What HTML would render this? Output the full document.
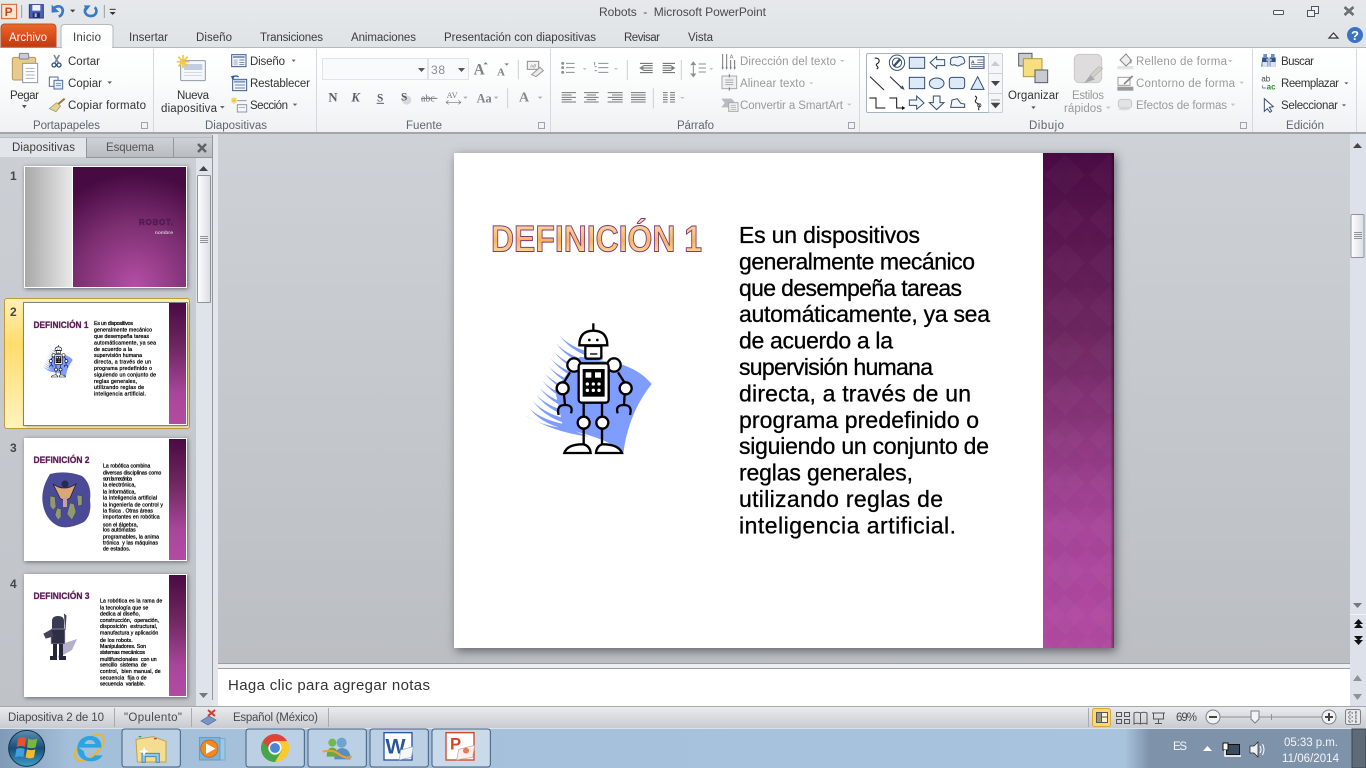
<!DOCTYPE html>
<html lang="es">
<head>
<meta charset="utf-8">
<title>Robots - Microsoft PowerPoint</title>
<style>
html,body{margin:0;padding:0;width:1366px;height:768px;overflow:hidden;background:#d8dce0;font-family:"Liberation Sans",sans-serif}
.b{position:absolute}
svg{position:absolute;left:0;top:0}
text{font-family:"Liberation Sans",sans-serif;white-space:pre}
.r{font-size:11.5px;fill:#333}
.g{font-size:11.5px;fill:#9a9a9a}
.l{font-size:11.5px;fill:#5f6670}
.t{font-size:11.5px;fill:#3c3c3c}
.s{font-size:11.5px;fill:#4a4a4a}
.m{font-size:23px;fill:#000;stroke:#000;stroke-width:.3}
.th{font-size:5.2px;fill:#000;stroke:#000;stroke-width:.25}
.tt{font-size:9.5px;font-weight:bold;fill:#5c1b57;stroke:#5c1b57;stroke-width:.3}
.n{font-size:12px;font-weight:bold;fill:#44484e}
</style>
</head>
<body>
<div class="b" style="left:0;top:0;width:1366px;height:47px;background:linear-gradient(#e6e9ec,#dfe3e6)"></div>
<div class="b" style="left:0;top:47px;width:1366px;height:87px;box-sizing:border-box;border-top:1px solid #b4b9be;border-bottom:2px solid #a2a6ab;background:linear-gradient(#fff 0,#fbfcfc 40%,#eff1f3 100%)"></div>
<div class="b" style="left:0;top:134px;width:217px;height:572px;background:linear-gradient(#ccd0d5,#bfc3c8)"></div>
<div class="b" style="left:212px;top:134px;width:6px;height:572px;background:#e3e6eb"></div>
<div class="b" style="left:218px;top:134px;width:1132px;height:530px;background:linear-gradient(#ced2d7,#bbbec2)"></div>
<div class="b" style="left:1350px;top:134px;width:16px;height:572px;background:#dde1ea"></div>
<div class="b" style="left:218px;top:663px;width:1132px;height:6px;box-sizing:border-box;border-top:1px solid #9a9da1;border-bottom:1px solid #9a9da1;background:#eceef0"></div>
<div class="b" style="left:218px;top:669px;width:1132px;height:37px;background:#fff"></div>
<div class="b" style="left:0;top:706px;width:1366px;height:22px;box-sizing:border-box;border-top:1px solid #a4a8ad;background:linear-gradient(#e9ebee,#c8cbd0)"></div>
<div class="b" style="left:0;top:728px;width:1366px;height:40px;background:linear-gradient(90deg,#7f9ab6 0,#a3bfda 70px,#a8c3dd 1125px,#7e92aa 1150px,#7e92aa 100%)"></div>
<div class="b" style="left:0;top:728px;width:1366px;height:1px;background:#dbe2ea"></div>
<div class="b" style="left:454px;top:153px;width:660px;height:495px;background:#fff;box-shadow:2px 3px 9px rgba(40,40,50,.6)"></div>
<div class="b" style="left:24px;top:166px;width:163px;height:122px;background:#fff;box-shadow:1px 1px 4px rgba(40,40,50,.6)"></div>
<div class="b" style="left:4px;top:298px;width:186px;height:131px;box-sizing:border-box;border:1px solid #c19a3c;border-radius:3px;background:linear-gradient(#fff0b4,#ffdc6c 35%,#fff3bf 100%)"></div>
<div class="b" style="left:24px;top:303px;width:163px;height:122px;background:#fff;outline:1px solid #7d8087;box-shadow:1px 1px 3px rgba(40,40,50,.5)"></div>
<div class="b" style="left:24px;top:438px;width:163px;height:123px;background:#fff;box-shadow:1px 1px 4px rgba(40,40,50,.6)"></div>
<div class="b" style="left:24px;top:574px;width:163px;height:123px;background:#fff;box-shadow:1px 1px 4px rgba(40,40,50,.6)"></div>

<svg width="1366" height="768" viewBox="0 0 1366 768" xmlns="http://www.w3.org/2000/svg">
<defs>
<linearGradient id="band" x1="0" y1="0" x2="0" y2="1"><stop offset="0" stop-color="#4a0a44"/><stop offset=".38" stop-color="#702862"/><stop offset=".75" stop-color="#a8469a"/><stop offset="1" stop-color="#b24ba2"/></linearGradient>
<linearGradient id="edge" x1="0" y1="0" x2="1" y2="0"><stop offset=".95" stop-color="#000" stop-opacity="0"/><stop offset="1" stop-color="#000" stop-opacity=".4"/></linearGradient>
<pattern id="dia" width="44" height="44" patternUnits="userSpaceOnUse" x="1043" y="153"><polygon points="22,2 42,22 22,42 2,22" fill="#fff" fill-opacity=".025"/><polygon points="22,-22 44,0 22,22 0,0" fill="#000" fill-opacity=".025"/><polygon points="22,22 44,44 22,66 0,44" fill="#000" fill-opacity=".025"/></pattern>
<linearGradient id="ttl" x1="0" y1="0" x2="0" y2="1"><stop offset="0" stop-color="#fde4c0"/><stop offset=".55" stop-color="#f9b45c"/><stop offset="1" stop-color="#fee8c8"/></linearGradient>
<linearGradient id="arch" x1="0" y1="0" x2="0" y2="1"><stop offset="0" stop-color="#e86a2e"/><stop offset=".55" stop-color="#d84c18"/><stop offset="1" stop-color="#c03a12"/></linearGradient>
<linearGradient id="tab" x1="0" y1="0" x2="0" y2="1"><stop offset="0" stop-color="#fff"/><stop offset="1" stop-color="#fbfcfc"/></linearGradient>
<radialGradient id="t1p" cx=".55" cy="1" r=".95"><stop offset="0" stop-color="#b64fa6"/><stop offset=".55" stop-color="#7d2f72"/><stop offset="1" stop-color="#470a42"/></radialGradient>
<linearGradient id="t1g" x1="0" y1="0" x2="1" y2="0"><stop offset="0" stop-color="#a8a8a8"/><stop offset="1" stop-color="#e9e9e9"/></linearGradient>
<linearGradient id="tb" x1="0" y1="0" x2="1" y2="0"><stop offset="0" stop-color="#fff"/><stop offset="1" stop-color="#d9dce3"/></linearGradient>
<linearGradient id="orb" x1="0" y1="0" x2="0" y2="1"><stop offset="0" stop-color="#5f8fb3"/><stop offset=".5" stop-color="#174e78"/><stop offset="1" stop-color="#3f9fc4"/></linearGradient>
<linearGradient id="esq" x1="0" y1="0" x2="0" y2="1"><stop offset="0" stop-color="#ced2d6"/><stop offset="1" stop-color="#b9bdc2"/></linearGradient>
<g id="robot">
<path fill="#7f9cff" d="M300 440L420 462Q480 480 515 522Q445 610 430 730Q400 690 250 655L225 540Z"/>
<path fill="#7f9cff" d="M238 376q40 44 130 60v14q-85 -14 -130 -74zM228 400q40 44 130 60v14q-85 -14 -130 -74zM222 425q40 44 130 60v14q-85 -14 -130 -74zM212 445q40 44 130 60v14q-85 -14 -130 -74zM205 468q40 44 130 60v14q-85 -14 -130 -74zM195 490q40 44 130 60v14q-85 -14 -130 -74zM187 512q40 44 130 60v14q-85 -14 -130 -74zM178 533q40 44 130 60v14q-85 -14 -130 -74zM168 553q40 44 130 60v14q-85 -14 -130 -74zM158 573q40 44 130 60v14q-85 -14 -130 -74zM147 594q40 40 130 52v14q-85 -10 -130 -66zM135 615q50 35 130 40l60 25q-110 -15 -190 -65z"/>
<g fill="#fff" stroke="#000" stroke-width="7">
<path d="M340 340V362" fill="none"/>
<path d="M298 406Q298 362 340 362Q382 362 382 406Z"/>
<path d="M316 408H364V440Q364 446 358 446H322Q316 446 316 440Z"/>
<path d="M270 487L250 520M414 487L435 520M252 553L255 585M434 553L432 585M311 578V622M366 578V622M311 656V705M366 656V705" fill="none"/>
<path d="M236 615Q228 585 255 585Q281 585 273 610M413 610Q405 585 432 585Q458 585 450 615" fill="none"/>
<circle cx="282" cy="465" r="20"/><circle cx="402" cy="465" r="20"/>
<circle cx="248" cy="535" r="18"/><circle cx="437" cy="535" r="18"/>
<circle cx="311" cy="638" r="18"/><circle cx="367" cy="638" r="18"/>
<rect x="296" y="460" width="90" height="118" rx="9"/>
<path d="M253 729Q262 702 311 703Q330 708 332 729ZM348 729Q350 708 366 703Q415 702 426 729Z"/>
</g>
<rect x="308" y="477" width="66" height="83" fill="#000"/>
<rect x="317" y="487" width="17" height="16" fill="#fff"/><rect x="345" y="487" width="18" height="16" fill="#fff"/>
<g fill="#fff"><circle cx="322" cy="522" r="5"/><circle cx="340" cy="522" r="5"/><circle cx="357" cy="522" r="5"/><circle cx="322" cy="541" r="5"/><circle cx="340" cy="541" r="5"/><circle cx="357" cy="541" r="5"/></g>
<circle cx="328" cy="390" r="4"/><circle cx="352" cy="390" r="4"/>
<path d="M330 432H352" stroke="#000" stroke-width="4"/>
</g>
</defs>

<!-- Quick access -->
<g transform="scale(.33333)">
<rect x="5" y="13" width="45" height="43" fill="#f6e5cf" stroke="#d5612a" stroke-width="3"/>
<text x="14" y="48" style="font-size:36px;font-weight:bold;fill:#c9471a">P</text>
<path d="M65 15V54" stroke="#9a9ea3" stroke-width="3"/>
<rect x="88" y="14" width="42" height="40" fill="#4a62b6" stroke="#273a88" stroke-width="3"/>
<rect x="97" y="15" width="24" height="17" fill="#eef1f8"/><rect x="98" y="38" width="22" height="15" fill="#20306c"/><rect x="104" y="40" width="6" height="11" fill="#b8c4e0"/>
<path d="M158 32C162 14 192 14 188 36C186 44 182 48 176 50" fill="none" stroke="#3a78c8" stroke-width="8"/><path d="M155 14L155 38L178 36Z" fill="#3a78c8"/>
<path d="M210 29H226L218 37Z" fill="#3c3c3c"/>
<path d="M284 22C294 30 290 48 272 48C258 48 252 36 256 26" fill="none" stroke="#3a78c8" stroke-width="8"/><path d="M252 16H272L258 34Z" fill="#3a78c8"/>
<path d="M313 15V54" stroke="#9a9ea3" stroke-width="3"/>
<path d="M329 28H347" stroke="#333" stroke-width="3"/><path d="M329 36H347L338 45Z" fill="#333"/>
</g>
<text x="599" y="16" textLength="167" style="font-size:12px;fill:#4a4a4a">Robots  -  Microsoft PowerPoint</text>
<!-- Window controls -->
<rect x="1273.5" y="10.5" width="10" height="4" rx="1" fill="#f4f5f6" stroke="#4f5560"/>
<rect x="1311.5" y="6.5" width="7" height="7" fill="#eef0f2" stroke="#4f5560"/><rect x="1307.5" y="10.5" width="7" height="6" fill="#eef0f2" stroke="#4f5560"/>
<path d="M1344.5 7L1353.5 15M1353.5 7L1344.5 15" stroke="#fff" stroke-width="4.5"/><path d="M1344.5 7L1353.5 15M1353.5 7L1344.5 15" stroke="#555b63" stroke-width="3" fill="none" opacity=".85"/>
<path d="M1329 38L1333.5 33L1338 38Z" fill="#fff" stroke="#333" stroke-width="1.2"/>
<circle cx="1355" cy="35" r="8" fill="#3a73c6"/><text x="1351" y="40" style="font-size:13px;font-weight:bold;fill:#fff">?</text>

<!-- Tabs -->
<path d="M1 47V28Q1 24 5 24H52Q56 24 56 28V47Z" fill="url(#arch)" stroke="#b9542a"/>
<path d="M61 47V28Q61 24.5 65 24.5H109Q113 24.5 113 28V47" fill="url(#tab)" stroke="#b4b9be"/>
<rect x="62" y="46" width="50" height="3" fill="#fff"/>
<text x="9" y="41" textLength="38" style="font-size:11.5px;fill:#fff">Archivo</text>
<text class="t" x="73" y="41" textLength="28">Inicio</text>
<text class="t" x="129" y="41" textLength="39">Insertar</text>
<text class="t" x="196" y="41" textLength="36">Diseño</text>
<text class="t" x="260" y="41" textLength="63">Transiciones</text>
<text class="t" x="351" y="41" textLength="65">Animaciones</text>
<text class="t" x="444" y="41" textLength="152">Presentación con diapositivas</text>
<text class="t" x="624" y="41" textLength="36">Revisar</text>
<text class="t" x="688" y="41" textLength="25">Vista</text>

<!-- Ribbon separators -->
<g stroke="#d5d8dc"><path d="M153.5 49V132M316.5 49V132M550.5 49V132M859.5 49V132M1252.5 49V132M1356.5 49V132"/></g>

<!-- Ribbon text -->
<text class="r" x="10" y="99" textLength="29">Pegar</text>
<text class="r" x="68" y="65" textLength="32">Cortar</text>
<text class="r" x="68" y="87" textLength="34">Copiar</text>
<text class="r" x="68" y="109" textLength="78">Copiar formato</text>
<text class="r" x="177" y="99" textLength="32">Nueva</text>
<text class="r" x="161" y="112" textLength="56">diapositiva</text>
<text class="r" x="250" y="65" textLength="35">Diseño</text>
<text class="r" x="250" y="87" textLength="60">Restablecer</text>
<text class="r" x="250" y="109" textLength="38">Sección</text>
<text class="g" x="740" y="65" textLength="96">Dirección del texto</text>
<text class="g" x="740" y="87" textLength="65">Alinear texto</text>
<text class="g" x="740" y="109" textLength="103">Convertir a SmartArt</text>
<text class="r" x="1008" y="99" textLength="51">Organizar</text>
<text class="g" x="1072" y="99" textLength="32">Estilos</text>
<text class="g" x="1064" y="112" textLength="38">rápidos</text>
<text class="g" x="1136" y="65" textLength="91">Relleno de forma</text>
<text class="g" x="1136" y="87" textLength="99">Contorno de forma</text>
<text class="g" x="1136" y="109" textLength="91">Efectos de formas</text>
<text class="r" x="1281" y="65" textLength="33">Buscar</text>
<text class="r" x="1281" y="87" textLength="58">Reemplazar</text>
<text class="r" x="1281" y="109" textLength="57">Seleccionar</text>
<text class="l" x="33" y="129" textLength="67">Portapapeles</text>
<text class="l" x="205" y="129" textLength="62">Diapositivas</text>
<text class="l" x="406" y="129" textLength="36">Fuente</text>
<text class="l" x="677" y="129" textLength="37">Párrafo</text>
<text class="l" x="1029" y="129" textLength="35">Dibujo</text>
<text class="l" x="1286" y="129" textLength="38">Edición</text>

<!-- Ribbon icons (left) -->
<g transform="scale(.33333)">
<rect x="37" y="172" width="70" height="68" rx="5" fill="#e9c98c" stroke="#b99758" stroke-width="3"/>
<rect x="58" y="160" width="28" height="17" rx="3" fill="#c9cdd2" stroke="#80858c" stroke-width="3"/>
<path d="M68 190H113V248H68Z" fill="#fff" stroke="#8d98a8" stroke-width="3"/>
<path d="M77 205H104M77 215H104M77 225H104M77 235H104" stroke="#a8b2c0" stroke-width="3"/>
<path d="M66 315H80L73 325Z" fill="#555"/>
<path d="M162 165L175 188M178 165L165 188" stroke="#7d8a9a" stroke-width="5"/><circle cx="162" cy="195" r="6" fill="none" stroke="#2b4f8a" stroke-width="4"/><circle cx="177" cy="195" r="6" fill="none" stroke="#2b4f8a" stroke-width="4"/>
<rect x="148" y="231" width="26" height="28" fill="#fff" stroke="#4e6d9a" stroke-width="3"/><rect x="162" y="241" width="26" height="26" fill="#e4ecf6" stroke="#4e6d9a" stroke-width="3"/><path d="M168 250H183M168 256H183" stroke="#4e6d9a" stroke-width="2"/>
<path d="M194 296L168 318" stroke="#9a7a3c" stroke-width="6"/><path d="M170 308L148 326L168 335L182 318Z" fill="#e6d28c" stroke="#8c8c7c" stroke-width="2"/>
<path d="M322 244H336L329 252Z M875 179H887L881 186Z M878 311H892L885 318Z" fill="#666"/>
<rect x="542" y="182" width="74" height="60" rx="3" fill="#f4f7fb" stroke="#8e99a6" stroke-width="3"/><rect x="552" y="192" width="55" height="18" fill="#c3cde0"/><path d="M552 218H606M552 226H606" stroke="#c0c8d4" stroke-width="2"/>
<path d="M549 165V204M530 185H568M535 170L563 199M563 170L535 199" stroke="#f2c93a" stroke-width="5"/>
<path d="M660 318H674L667 326Z" fill="#666"/>
<rect x="695" y="164" width="43" height="36" fill="#f2f5fa" stroke="#3b5c8c" stroke-width="3"/><rect x="699" y="168" width="35" height="6" fill="#7f9bc6"/><rect x="701" y="178" width="12" height="18" fill="#c2cfe4"/><path d="M718 180H733M718 187H733M718 193H733" stroke="#3b5c8c" stroke-width="2"/>
<rect x="698" y="238" width="42" height="34" fill="#f2f5fa" stroke="#3b5c8c" stroke-width="3"/><rect x="702" y="242" width="34" height="6" fill="#7f9bc6"/><path d="M705 255H735M705 264H735" stroke="#6a83ad" stroke-width="3"/><path d="M716 231C708 225 700 228 697 237" fill="none" stroke="#2b5ca0" stroke-width="4"/><path d="M692 229L703 226L700 240Z" fill="#2b5ca0"/>
<path d="M702 291V312M693 301H712M695 294L709 308M709 294L695 308" stroke="#f2c93a" stroke-width="3"/><path d="M712 302H740" stroke="#8d98a8" stroke-width="3"/><rect x="712" y="314" width="28" height="22" fill="#f4f6fa" stroke="#8d98a8" stroke-width="3"/><path d="M716 322H735" stroke="#8d98a8" stroke-width="2"/>
</g>
<!-- Font group -->
<rect x="322.5" y="58.5" width="105" height="21" fill="#f9fafb" stroke="#e1e3e7"/>
<rect x="428.5" y="58.5" width="40" height="21" fill="#f9fafb" stroke="#e1e3e7"/>
<text x="431" y="74" textLength="14" style="font-size:12px;fill:#8c8c9a">38</text>
<path d="M418 68H425L421.5 72ZM458 68H465L461.5 72Z" fill="#555"/>
<g transform="translate(320,50) scale(.33333)" style="fill:#808488">
<text x="461" y="74" style="font-family:'Liberation Serif';font-size:46px;font-weight:bold">A</text>
<path d="M490 43L497 36L504 43Z"/>
<text x="531" y="76" style="font-family:'Liberation Serif';font-size:33px;font-weight:bold">A</text>
<path d="M553 40H567L560 47Z"/>
<path d="M595 30V88" stroke="#ccd0d4" stroke-width="3"/>
<rect x="622" y="34" width="34" height="24" fill="#f3f3f3" stroke="#8d8d8d" stroke-width="3"/>
<text x="630" y="52" style="font-size:15px;fill:#777">A∂</text>
<path d="M635 74L660 52L670 62L648 80Z" fill="#efe9e9" stroke="#999" stroke-width="3"/>
<text x="25" y="155" style="font-family:'Liberation Serif';font-size:38px;font-weight:bold;fill:#5a5f65">N</text>
<text x="94" y="155" style="font-family:'Liberation Serif';font-size:38px;font-style:italic;font-weight:bold;fill:#5a5f65">K</text>
<text x="171" y="155" style="font-family:'Liberation Serif';font-size:34px;font-weight:bold;fill:#5a5f65">S</text>
<path d="M170 160H192" stroke="#5a5f65" stroke-width="3"/>
<circle cx="260" cy="150" r="14" fill="#d6d8db"/>
<text x="243" y="152" style="font-family:'Liberation Serif';font-size:34px;font-weight:bold;fill:#55595f">S</text>
<text x="303" y="155" style="font-family:'Liberation Serif';font-size:30px;fill:#74787d">abc</text>
<path d="M303 145H352" stroke="#74787d" stroke-width="3"/>
<text x="380" y="144" style="font-family:'Liberation Serif';font-size:25px;fill:#74787d">AV</text>
<path d="M378 157H423M378 157L386 151M378 157L386 163M423 157L415 151M423 157L415 163" stroke="#74787d" stroke-width="2" fill="none"/>
<path d="M430 140H443L436 147ZM522 140H535L528 147ZM654 140H667L660 147Z" fill="#a8acb0"/>
<text x="470" y="158" style="font-family:'Liberation Serif';font-size:37px;font-weight:bold">Aa</text>
<path d="M563 115V175" stroke="#ccd0d4" stroke-width="3"/>
<text x="597" y="154" style="font-family:'Liberation Serif';font-size:42px;font-weight:bold;fill:#888">A</text>
</g>
<!-- Paragraph group -->
<g transform="translate(460,0) scale(.33333)" stroke="#8c8f93" stroke-width="3" fill="none">
<path d="M318 190H344M318 203H344M318 217H344M415 190H445M415 203H445M415 217H445"/>
<circle cx="308" cy="190" r="3" fill="#8c8f93"/><circle cx="308" cy="203" r="3" fill="#8c8f93"/><circle cx="308" cy="217" r="3" fill="#8c8f93"/>
<path d="M404 186V196M404 200H410M404 212H410" />
<path d="M540 190H578M550 197H578M550 204H578M550 211H578M540 218H578M608 190H645M608 197H634M608 204H634M608 211H634M608 218H645" stroke="#666"/>
<path d="M540 204L549 198V210Z M644 204L635 198V210Z" fill="#666"/>
<path d="M700 196V222" /><path d="M716 192H738M716 204H738M716 216H738"/>
<path d="M694 194L700 186L706 194ZM694 222L700 230L706 222Z" fill="#8c8f93"/>
<path d="M502 180V240M664 180V240M580 265V325" stroke="#ccd0d4"/>
<path d="M305 278H348M305 285H335M305 292H348M305 299H335M305 306H348M372 278H416M380 285H408M372 292H416M380 299H408M372 306H416M443 278H488M456 285H488M443 292H488M456 299H488M443 306H488M513 278H557M513 285H557M513 292H557M513 299H557M513 306H557M609 278H623M630 278H645M609 285H623M630 285H645M609 292H623M630 292H645M609 299H623M630 299H645M609 306H623M630 306H645" stroke="#777"/>
<path d="M788 162V205M800 162V205M812 180V205M824 180V205" stroke="#777"/>
<path d="M786 202L788 206L790 202M798 202L800 206L802 202M810 202L812 206L814 202M822 202L824 206L826 202" stroke="#777"/>
<text x="809" y="176" style="font-size:17px;fill:#777;stroke:none">A</text>
<rect x="786" y="228" width="44" height="38" fill="#eef0f2" stroke="#aaa"/><path d="M796 240H820M796 247H820M796 254H820" stroke="#aaa"/>
<path d="M808 222V232M808 262V272" stroke="#777"/>
<path d="M784 296H815L826 309L815 322H784L794 309Z" fill="#b8bcc2" stroke="none"/><rect x="806" y="308" width="28" height="26" fill="#f1f1f1" stroke="#aaa"/><path d="M812 316H828M812 322H828M812 328H828" stroke="#bbb"/>
<path d="M368 204H380L374 210ZM462 204H474L468 210ZM748 204H760L754 210ZM1140 180H1154L1147 186ZM1048 247H1060L1054 253ZM1161 311H1175L1168 317ZM660 291H674L667 297Z" fill="#bfc2c6" stroke="none"/>
</g>
<!-- Launcher corners -->
<g stroke="#a0a4aa" fill="none"><path d="M141.5 122.5H147.5V128.5H141.5ZM538.5 122.5H544.5V128.5H538.5ZM848.5 122.5H854.5V128.5H848.5ZM1240.5 122.5H1246.5V128.5H1240.5Z"/></g>
<!-- Shapes gallery -->
<rect x="866.5" y="53.5" width="136" height="59" rx="1.5" fill="#fff" stroke="#a9b1bc"/>
<rect x="988.5" y="53.5" width="14" height="59" rx="1.5" fill="#f5f6f8" stroke="#cdd1d6"/>
<path d="M988.5 73.5H1002.5M988.5 93.5H1002.5" stroke="#cdd1d6"/>
<path d="M991 66L995 61L1000 66Z" fill="#c8cbcf"/>
<path d="M991 81H1000L995.5 86Z" fill="#444"/>
<path d="M991 100H1000M991 103H1000L995.5 108Z" fill="#444" stroke="#444" stroke-width=".5"/>
<g transform="translate(860,0) scale(.33333)" fill="#fff" stroke="#354d72" stroke-width="3">
<path d="M44 174C62 174 60 188 50 192C44 197 62 202 50 207" fill="none" stroke="#111"/>
<circle cx="111" cy="188" r="23"/><circle cx="111" cy="188" r="14"/><path d="M102 198L120 178" stroke-width="7"/>
<rect x="148" y="172" width="46" height="33" fill="#dbeaf6"/>
<path d="M210 188L230 170V179H254V197H230V206Z" fill="#f4f8fc"/>
<path d="M272 178C276 168 288 172 292 172C300 166 312 172 312 178C318 186 312 194 304 192C298 200 288 198 284 194C276 198 268 192 272 186Z" fill="#eef4fa"/>
<rect x="328" y="170" width="44" height="35" fill="#f8f9fc"/><path d="M352 180H370M352 187H370M334 194H370M334 200H370" stroke-width="2"/>
<text x="333" y="190" style="font-size:15px;font-weight:bold;fill:#222;stroke:none">A</text>
<path d="M30 230L72 270" fill="none" stroke="#222"/><path d="M90 230L127 265" fill="none" stroke="#222"/><path d="M134 270L120 264L128 256Z" fill="#354d72" stroke="none"/>
<rect x="148" y="232" width="46" height="34" fill="#dbeaf6"/>
<ellipse cx="230" cy="250" rx="22" ry="16" fill="#dbeaf6"/>
<rect x="268" y="232" width="46" height="34" rx="8" fill="#dbeaf6"/>
<path d="M353 230L372 268H333Z" fill="#dbeaf6"/>
<path d="M28 294H48V324H76" fill="none" stroke="#111"/>
<path d="M88 294H110V324H128" fill="none" stroke="#111"/><path d="M136 324L126 318V330Z" fill="#111" stroke="none"/>
<path d="M148 300H170V288L192 309L170 328V316H148Z" fill="#f4f8fc"/>
<path d="M220 288H240V308H252L230 329L208 308H220Z" fill="#f4f8fc"/>
<path d="M272 322L276 300L292 296L302 310L314 312L314 322Z" fill="#f4f8fc"/>
<path d="M345 288C360 296 335 302 352 310C366 316 350 328 358 330" fill="none" stroke="#222"/><circle cx="358" cy="316" r="5" fill="none" stroke="#222" stroke-width="2"/>
</g>
<!-- Arrange / styles / fills -->
<g transform="translate(860,0) scale(.33333)">
<rect x="476" y="160" width="40" height="38" fill="#c8ccd0" stroke="#575b61" stroke-width="3"/>
<rect x="490" y="176" width="56" height="54" fill="#f7df7e" stroke="#b4963c" stroke-width="3"/>
<rect x="525" y="210" width="38" height="38" fill="#c8ccd0" stroke="#575b61" stroke-width="3"/>
<path d="M514 319H527L520 327Z M1453 247H1465L1459 253Z M1446 313H1458L1452 319Z" fill="#555"/>
<rect x="643" y="163" width="82" height="85" rx="15" fill="#dfdcdd" stroke="#cac8ca" stroke-width="3"/>
<path d="M728 205L700 232L690 226L716 200Z" fill="#d4d0c8" stroke="#b4b4b4" stroke-width="2"/><path d="M690 226L672 250L705 238Z" fill="#a9a9ad"/>
<path d="M738 320H752L745 327Z M1104 180H1118L1111 187Z M1138 245H1152L1145 252Z M1112 311H1126L1119 318Z" fill="#c2c4c8"/>
<rect x="772" y="198" width="48" height="10" fill="#e4e4e6"/><path d="M780 180L798 162L815 182L798 198Z" fill="#eeeeee" stroke="#8a8a8c" stroke-width="3"/><path d="M812 178V190" stroke="#999" stroke-width="5"/>
<rect x="772" y="260" width="48" height="12" fill="#9a9a9c"/><rect x="774" y="232" width="36" height="24" fill="#fbfbfb" stroke="#9d9d9f" stroke-width="3"/><path d="M792 252L818 228" stroke="#888" stroke-width="5"/>
<rect x="775" y="298" width="40" height="26" rx="9" fill="#e3e3e5" stroke="#c8c8ca" stroke-width="3"/><ellipse cx="792" cy="328" rx="18" ry="3" fill="#dcdde0"/>
<!-- Find etc. -->
<path d="M1207 172H1225V200H1204ZM1229 172H1247V200H1229Z" fill="#2f4f86"/><rect x="1210" y="162" width="11" height="12" fill="#6e8fc4"/><rect x="1233" y="162" width="11" height="12" fill="#6e8fc4"/><rect x="1219" y="176" width="16" height="8" fill="#9db4d8"/><rect x="1207" y="186" width="16" height="14" fill="#d7e2f2"/><rect x="1231" y="186" width="16" height="14" fill="#d7e2f2"/>
<text x="1204" y="244" style="font-size:24px;fill:#444">ab</text><text x="1220" y="268" style="font-size:24px;font-weight:bold;fill:#3a8a3a">ac</text><path d="M1208 256V264H1218" fill="none" stroke="#2b5ca0" stroke-width="2"/>
<path d="M1213 296V334L1222 326L1230 337L1235 333L1228 322L1240 320Z" fill="#fff" stroke="#3b4f72" stroke-width="3"/>
</g>

<!-- Left panel tabs -->
<path d="M0 157V138H86V157" fill="#e2e5e9" stroke="none"/>
<rect x="87" y="138" width="86" height="19" fill="url(#esq)"/>
<rect x="174" y="138" width="38" height="19" fill="url(#esq)"/>
<path d="M86.5 138V157.5H212M173.5 138V157M212.5 135V700" stroke="#93979d" fill="none"/>
<path d="M0 137.5H212" stroke="#b7babf"/>
<text x="12" y="151" textLength="63" style="font-size:11.5px;fill:#3c3c3c">Diapositivas</text>
<text x="106" y="151" textLength="48" style="font-size:11.5px;fill:#555">Esquema</text>
<path d="M198 144L206 152M206 144L198 152" stroke="#5f6369" stroke-width="2.4"/>
<rect x="196" y="158" width="16" height="548" fill="#dfe3ea"/>
<path d="M199 171L203.5 166L208 171Z" fill="#444"/>
<rect x="197.5" y="175.5" width="13" height="127" rx="1" fill="url(#tb)" stroke="#8f949b"/>
<path d="M200 236.5H208M200 238.5H208M200 240.5H208M200 242.5H208" stroke="#8f949b"/>
<path d="M199 693H208L203.5 698Z" fill="#777"/>

<!-- Numbers -->
<text class="n" x="10" y="180">1</text><text class="n" x="10" y="316">2</text><text class="n" x="10" y="452">3</text><text class="n" x="10" y="588">4</text>

<!-- Thumb 1 -->
<rect x="25" y="167" width="47" height="120" fill="url(#t1g)"/>
<rect x="73" y="167" width="113" height="120" fill="url(#t1p)"/>
<text x="139" y="225" textLength="34" style="font-size:8px;font-weight:bold;fill:#5a2058;stroke:#3e1040;stroke-width:.3">ROBOT.</text>
<text x="155" y="234" textLength="18" style="font-size:4.8px;fill:#fff">nombre</text>

<!-- Thumb 2 -->
<rect x="169" y="303" width="17" height="121" fill="url(#band)"/>
<text class="tt" x="33.5" y="328" textLength="55" lengthAdjust="spacingAndGlyphs">DEFINICIÓN 1</text>
<use href="#robot" transform="translate(30.4,317) scale(.0823)"/>
<g>
<text class="th" x="94" y="325" textLength="39">Es un dispositivos</text>
<text class="th" x="94" y="331.5" textLength="58">generalmente mecánico</text>
<text class="th" x="94" y="338" textLength="55">que desempeña tareas</text>
<text class="th" x="94" y="344.4" textLength="62">automáticamente, ya sea</text>
<text class="th" x="94" y="350.8" textLength="38">de acuerdo a la</text>
<text class="th" x="94" y="357.2" textLength="48">supervisión humana</text>
<text class="th" x="94" y="363.6" textLength="57">directa, a través de un</text>
<text class="th" x="94" y="370" textLength="58">programa predefinido o</text>
<text class="th" x="94" y="376.4" textLength="62">siguiendo un conjunto de</text>
<text class="th" x="94" y="382.8" textLength="43">reglas generales,</text>
<text class="th" x="94" y="389.2" textLength="50">utilizando reglas de</text>
<text class="th" x="94" y="395.6" textLength="52">inteligencia artificial.</text>
</g>

<!-- Thumb 3 -->
<rect x="169" y="439" width="17" height="121" fill="url(#band)"/>
<text class="tt" x="33.5" y="463" textLength="56" lengthAdjust="spacingAndGlyphs">DEFINICIÓN 2</text>
<path d="M50 474Q66 470 82 476Q92 484 90 500Q92 515 84 522Q68 530 58 526Q46 520 43 505Q40 490 50 474Z" fill="#4b4a96"/>
<path d="M53 484Q64 492 76 484L70 498Q64 502 60 498Z" fill="#d8a878" stroke="#223" stroke-width=".8"/>
<circle cx="65" cy="484" r="3.5" fill="#222a55"/>
<path d="M50 496l5 1 1 10-3 3-3-4zM77 495l5 1 0 9-4 1zM70 503l4 1 2 8-4 8-5-6zM57 508l4 1 0 8-3 3-3-5z" fill="#8f9a72" stroke="#334" stroke-width=".4"/>
<rect x="63" y="497" width="4" height="10" fill="#c8a0a0"/>
<g><text class="th" x="103" y="467.5" textLength="47.3">La robótica combina</text>
<text class="th" x="103" y="474.5" textLength="58.3">diversas disciplinas como</text>
<text class="th" x="103" y="480.5" textLength="29">son: la mecánica</text>
<text class="th" x="103" y="486.3" textLength="32.7">la electrónica,</text>
<text class="th" x="103" y="493.5" textLength="32.7">la informática,</text>
<text class="th" x="103" y="499.3" textLength="54">la inteligencia artificial</text>
<text class="th" x="103" y="506.3" textLength="60">la ingeniería de control y</text>
<text class="th" x="103" y="512.3" textLength="50">la física . Otras áreas</text>
<text class="th" x="103" y="518.3" textLength="56.7">importantes en robótica</text>
<text class="th" x="103" y="526.3" textLength="35">son el álgebra,</text>
<text class="th" x="103" y="531.3" textLength="32.7">los autómatas</text>
<text class="th" x="103" y="538.3" textLength="56">programables, la anima</text>
<text class="th" x="103" y="544.3" textLength="55">trónica  y las máquinas</text>
<text class="th" x="103" y="550.3" textLength="27.3">de estados.</text></g>

<!-- Thumb 4 -->
<rect x="169" y="575" width="17" height="121" fill="url(#band)"/>
<text class="tt" x="33.5" y="599" textLength="56" lengthAdjust="spacingAndGlyphs">DEFINICIÓN 3</text>
<path d="M62 644L77 639L72 650L58 658Z" fill="#9b94b8" opacity=".75"/>
<path d="M58 613V620M52 621Q52 616 58 616Q64 616 64 621V632H52Z" fill="#3a3a52"/>
<rect x="51" y="629" width="14" height="15" fill="#2e2e44" stroke="#b8b4d0" stroke-width=".6"/>
<path d="M51 630L44 634L46 638L53 636ZM65 630L66 616L64 614" fill="#444258" stroke="#444258"/>
<path d="M53 644V656H50V660H57V644ZM59 644V656H59V660H66V656H63V644Z" fill="#26263a"/>
<g><text class="th" x="100" y="602.5" textLength="62.3">La robótica es la rama de</text>
<text class="th" x="100" y="609.5" textLength="48.3">la tecnología que se</text>
<text class="th" x="100" y="615.5" textLength="40">dedica al diseño,</text>
<text class="th" x="100" y="621.8" textLength="59">construcción,  operación,</text>
<text class="th" x="100" y="628.2" textLength="57.3">disposición  estructural,</text>
<text class="th" x="100" y="634.5" textLength="58.3">manufactura y aplicación</text>
<text class="th" x="100" y="641.8" textLength="32.7">de los robots.</text>
<text class="th" x="100" y="647.8" textLength="46">Manipuladores. Son</text>
<text class="th" x="100" y="653.8" textLength="45">sistemas mecánicos</text>
<text class="th" x="100" y="660.8" textLength="56.7">multifuncionales  con un</text>
<text class="th" x="100" y="666.5" textLength="46.7">sencillo  sistema  de</text>
<text class="th" x="100" y="673.2" textLength="60.7">control,  bien manual, de</text>
<text class="th" x="100" y="679.5" textLength="46.7">secuencia  fija o de</text>
<text class="th" x="100" y="685.5" textLength="45">secuencia  variable.</text></g>

<!-- Main slide -->
<rect x="1043" y="153" width="71" height="495" fill="url(#band)"/>
<rect x="1043" y="153" width="71" height="495" fill="url(#dia)"/>
<rect x="1043" y="153" width="71" height="495" fill="url(#edge)"/>
<text x="491" y="251.5" textLength="211" lengthAdjust="spacingAndGlyphs" style="font-size:37px;font-weight:bold;fill:url(#ttl);stroke:#7d3a78;stroke-width:1">DEFINICIÓN 1</text>
<use href="#robot" transform="translate(480,210) scale(.33333)"/>
<text class="m" x="739" y="243" textLength="181">Es un dispositivos</text>
<text class="m" x="739" y="269.4" textLength="236">generalmente mecánico</text>
<text class="m" x="739" y="295.8" textLength="223">que desempeña tareas</text>
<text class="m" x="739" y="322.2" textLength="251">automáticamente, ya sea</text>
<text class="m" x="739" y="348.6" textLength="154">de acuerdo a la</text>
<text class="m" x="739" y="375" textLength="194">supervisión humana</text>
<text class="m" x="739" y="401.4" textLength="232">directa, a través de un</text>
<text class="m" x="739" y="427.8" textLength="240">programa predefinido o</text>
<text class="m" x="739" y="454.2" textLength="250">siguiendo un conjunto de</text>
<text class="m" x="739" y="480.6" textLength="174">reglas generales,</text>
<text class="m" x="739" y="507" textLength="204">utilizando reglas de</text>
<text class="m" x="739" y="533.4" textLength="217">inteligencia artificial.</text>

<!-- Main scrollbar -->
<path d="M1353 148L1357.5 143L1362 148H1353Z" fill="#444"/>
<rect x="1351" y="214.5" width="13" height="43" rx="1" fill="url(#tb)" stroke="#8f949b"/>
<path d="M1354 232.5H1362M1354 234.5H1362M1354 236.5H1362M1354 238.5H1362" stroke="#8f949b"/>
<path d="M1353 603H1362L1357.5 608Z" fill="#777"/>
<path d="M1350 614.5H1366" stroke="#f2f3f6"/>
<path d="M1354 624L1358.5 619L1363 624ZM1354 628L1358.5 623L1363 628Z M1354 636H1363L1358.5 641ZM1354 640H1363L1358.5 645Z" fill="#111"/>
<path d="M1353 681L1357.5 675L1362 681Z M1353 694H1362L1357.5 700Z" fill="#8f9398"/>
<text x="228" y="690" textLength="202" style="font-size:15px;fill:#333">Haga clic para agregar notas</text>

<!-- Status bar -->
<text class="s" x="8" y="721" textLength="96">Diapositiva 2 de 10</text>
<text class="s" x="124" y="721" textLength="58">"Opulento"</text>
<text class="s" x="233" y="721" textLength="85">Español (México)</text>
<path d="M114.5 708V727M191.5 708V727M328.5 708V727M1088.5 708V727" stroke="#a8abb0"/>
<path d="M201 721L209 716L216 720L208 725Z" fill="#7a94c6" stroke="#4e6698" stroke-width=".7"/>
<path d="M208 710L215 716M215 710L208 716" stroke="#d8392c" stroke-width="2"/>
<rect x="1092.5" y="708.5" width="18" height="18" rx="2" fill="#fbd67c" stroke="#d8a838"/>
<rect x="1096.5" y="712.5" width="11" height="10" fill="#fff3cc" stroke="#555"/><path d="M1101.5 712V723M1102 717H1107" stroke="#555"/><rect x="1097" y="713" width="4" height="9" fill="#555" opacity=".6"/>
<path d="M1116.5 712.5H1121.5V716.5H1116.5ZM1124.5 712.5H1129.5V716.5H1124.5ZM1116.5 719.5H1121.5V723.5H1116.5ZM1124.5 719.5H1129.5V723.5H1124.5Z" fill="none" stroke="#555"/>
<path d="M1140.5 713C1138 712 1136 712 1134 713V724C1136 723 1138 723 1140.5 724C1143 723 1145 723 1147 724V713C1145 712 1143 712 1140.5 713V724" fill="none" stroke="#555"/>
<path d="M1152 713H1165M1153.5 713V719H1163.5V713M1158.5 719V723M1155 723.5H1162" fill="none" stroke="#555"/>
<text class="s" x="1176" y="721" textLength="21">69%</text>
<circle cx="1213" cy="717" r="7" fill="#f1f2f4" stroke="#7b7f86"/><path d="M1209 717H1217" stroke="#444" stroke-width="2"/>
<path d="M1220 717H1322" stroke="#8d9096"/><path d="M1271.5 714V720" stroke="#8d9096"/>
<path d="M1251 711H1259V719L1255 723L1251 719Z" fill="#f2f3f5" stroke="#7b7f86"/>
<circle cx="1329" cy="717" r="7" fill="#f1f2f4" stroke="#7b7f86"/><path d="M1325 717H1333M1329 713V721" stroke="#444" stroke-width="2"/>
<rect x="1345.5" y="709.5" width="15" height="15" rx="2" fill="#e6e8ec" stroke="#7b7f86"/>
<path d="M1348 713H1358M1348 717H1358M1348 721H1358M1350 711V723M1356 711V723" stroke="#555" stroke-dasharray="1.5 2"/>

<!-- Taskbar -->
<g transform="translate(0,700) scale(.33333)">
<circle cx="80" cy="145" r="54" fill="url(#orb)" stroke="#14304c" stroke-width="3"/>
<path d="M55 115Q68 108 78 115L75 141Q62 135 50 141Z" fill="#e8532a"/>
<path d="M85 116Q96 122 112 116L107 142Q94 147 81 142Z" fill="#7cb53c"/>
<path d="M49 147Q60 141 74 147L70 172Q58 166 45 172Z" fill="#3f9fe0"/>
<path d="M81 148Q94 153 106 148L102 172Q90 178 77 172Z" fill="#f4b92c"/>
<ellipse cx="268" cy="143" rx="52" ry="26" transform="rotate(-40 268 143)" fill="none" stroke="#f0b61e" stroke-width="6"/>
<path d="M236 143H304C306 120 290 108 270 108C248 108 232 124 232 146C232 170 250 184 272 184C288 184 300 178 308 166H284C280 172 276 174 270 174C258 174 252 164 252 154M254 132C256 122 264 120 270 120C278 120 284 124 286 132Z" fill="#2ba4e0" fill-rule="evenodd"/>
<rect x="366" y="87" width="175" height="114" rx="8" fill="#fff" fill-opacity=".25" stroke="#44607e" stroke-width="3"/>
<rect x="738" y="87" width="175" height="114" rx="8" fill="#fff" fill-opacity=".25" stroke="#44607e" stroke-width="3"/>
<rect x="924" y="87" width="175" height="114" rx="8" fill="#fff" fill-opacity=".25" stroke="#44607e" stroke-width="3"/>
<rect x="1110" y="87" width="175" height="114" rx="8" fill="#fff" fill-opacity=".25" stroke="#44607e" stroke-width="3"/>
<rect x="1296" y="87" width="175" height="114" rx="8" fill="#fff" fill-opacity=".42" stroke="#44607e" stroke-width="3"/>
<path d="M408 118L460 110L498 124V186H412Z" fill="#f4dc90" stroke="#c0a050" stroke-width="3"/>
<rect x="416" y="108" width="8" height="4" fill="#3aa03a"/><rect x="462" y="114" width="8" height="4" fill="#d04040"/>
<path d="M426 187V160H478V187H468V170H436V187Z" fill="#8ec8e8" stroke="#4c88b0" stroke-width="3"/>
<path d="M428 150L432 140L436 150L446 154L436 158L432 168L428 158L418 154Z" fill="#fff"/>
<rect x="607" y="116" width="68" height="64" fill="#9cc8e4" stroke="#6a9cc0" stroke-width="2"/>
<rect x="598" y="112" width="62" height="68" fill="#7ab4dc" stroke="#5a94bc" stroke-width="2"/>
<circle cx="628" cy="146" r="26" fill="#f08a1e" stroke="#c05a10" stroke-width="2"/>
<path d="M618 130L646 146L618 162Z" fill="#fff"/>
<circle cx="825" cy="144" r="42" fill="#dc4437"/>
<path d="M789 123A42 42 0 0 0 825 186L846 150L825 144L804 144Z" fill="#45a64a"/>
<path d="M825 186A42 42 0 0 0 862 123L825 123L846 150Z" fill="#fbcb2d"/>
<circle cx="825" cy="144" r="20" fill="#fff"/><circle cx="825" cy="144" r="15" fill="#4a86d8"/>
<circle cx="1025" cy="128" r="15" fill="#6ea4cf"/><path d="M1003 178Q1002 146 1026 144Q1052 146 1052 178Z" fill="#5a8ec0"/>
<circle cx="997" cy="128" r="12" fill="#74b84c"/><path d="M980 170Q980 144 997 143Q1014 144 1014 170Z" fill="#6aa840"/>
<path d="M968 155Q1000 146 1020 165Q1040 178 1056 170" fill="none" stroke="#f0a030" stroke-width="6"/>
<rect x="1152" y="98" width="84" height="82" fill="#fff" stroke="#2b579a" stroke-width="4"/>
<text x="1156" y="160" style="font-size:64px;font-weight:bold;fill:#2b579a">W</text>
<path d="M1202 150L1240 140L1234 172L1198 180Z" fill="#f4f6fa" stroke="#9ab" stroke-width="2"/>
<rect x="1338" y="98" width="84" height="82" fill="#fff" stroke="#d24726" stroke-width="4"/>
<text x="1350" y="148" style="font-size:50px;font-weight:bold;fill:#d24726">P</text>
<path d="M1376 148L1424 136L1418 172L1370 180Z" fill="#f9efec" stroke="#c99" stroke-width="2"/>
<circle cx="1398" cy="152" r="9" fill="#e47a5c"/>
</g>
<text x="1173" y="750" textLength="14" style="font-size:11.5px;fill:#f4f6f8">ES</text>
<path d="M1203 751L1207.5 746L1212 751Z" fill="#fff"/>
<rect x="1226.5" y="744.5" width="13" height="10" fill="#111c2a" fill-opacity=".6" stroke="#111"/>
<rect x="1223" y="743" width="5" height="7" fill="#fff" stroke="#111"/><path d="M1225 750V756H1241" stroke="#fff" stroke-width="1.5" fill="none"/>
<path d="M1250 746H1254L1258 742V757L1254 753H1250Z" fill="#eef2f6" stroke="#222" stroke-width=".7"/>
<path d="M1260 746Q1262 749.5 1260 753M1262.5 744Q1265.5 749.5 1262.5 755" stroke="#fff" fill="none"/>
<text x="1284" y="746" textLength="54" style="font-size:11.5px;fill:#f4f6f8">05:33 p.m.</text>
<text x="1282" y="762" textLength="57" style="font-size:11.5px;fill:#f4f6f8">11/06/2014</text>
<rect x="1352" y="729" width="14" height="39" fill="#5f6a78" stroke="#3a4450"/>
</svg>
</body>
</html>
